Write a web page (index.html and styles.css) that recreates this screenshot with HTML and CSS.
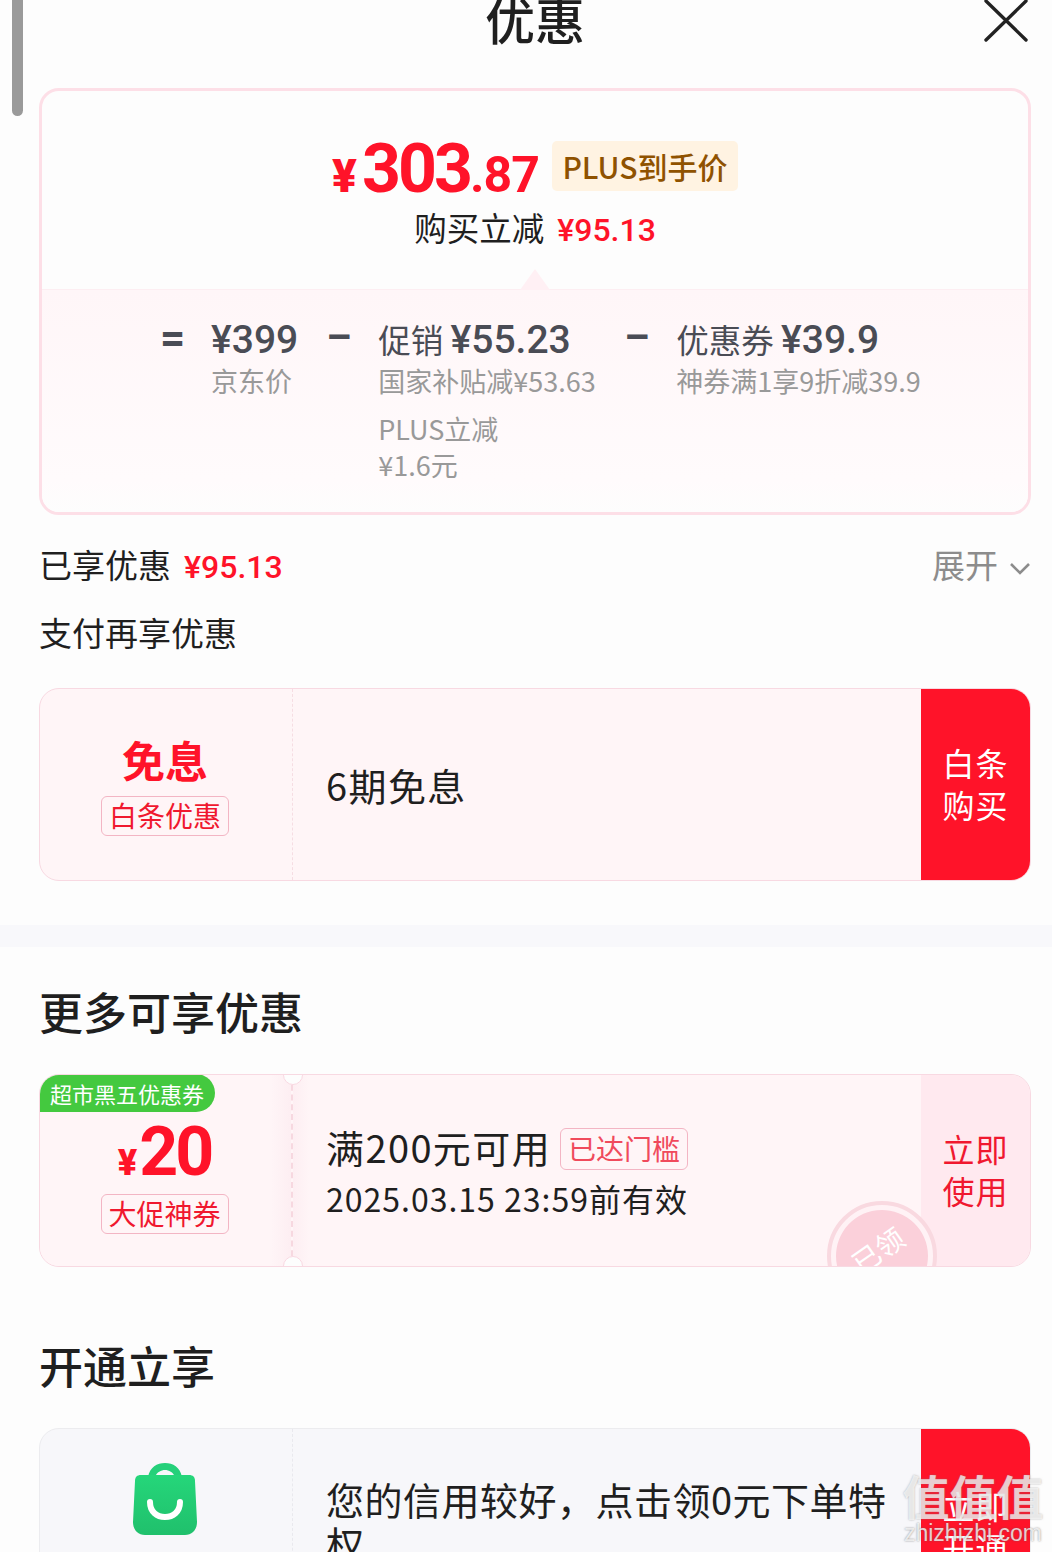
FILE: index.html
```html
<!DOCTYPE html>
<html>
<head>
  <meta charset="utf-8">
  <title>优惠</title>
  <link rel="stylesheet" href="styles.css">
</head>
<body>
  <div class="page">
    <div class="scrollbar"></div>
    <div class="head">优惠</div>
    <svg class="close" width="44" height="42" viewBox="0 0 44 42"><path d="M2 1 L42 40 M42 1 L2 40" stroke="#222" stroke-width="3.4" fill="none" stroke-linecap="round"/></svg>

    <div class="summary">
      <div class="summary-top">
        <div class="price-row">
          <div class="price"><span class="yen">¥</span><span class="big">303</span><span class="dec">.87</span></div>
          <div class="plus-tag">PLUS到手价</div>
        </div>
        <div class="cut-row">购买立减<span class="red-num">¥95.13</span></div>
      </div>
      <div class="summary-bottom">
        <span class="arrow"></span>
        <div class="formula">
          <div class="op op-eq">=</div>
          <div class="term">
            <div class="term-main"><span class="num">¥399</span></div>
            <div class="term-sub">京东价</div>
          </div>
          <div class="op">–</div>
          <div class="term term-promo">
            <div class="term-main">促销 <span class="num">¥55.23</span></div>
            <div class="term-sub">国家补贴减¥53.63</div>
            <div class="term-sub term-gap">PLUS立减</div>
            <div class="term-sub">¥1.6元</div>
          </div>
          <div class="op">–</div>
          <div class="term">
            <div class="term-main">优惠券 <span class="num">¥39.9</span></div>
            <div class="term-sub">神券满1享9折减39.9</div>
          </div>
        </div>
      </div>
    </div>

    <div class="saved-row">
      <div>已享优惠<span class="red-num">¥95.13</span></div>
      <div class="expand">展开
        <svg width="22" height="14" viewBox="0 0 22 14"><path d="M2 2 L11 11 L20 2" stroke="#8c8c8c" stroke-width="2.6" fill="none"/></svg>
      </div>
    </div>
    <div class="pay-title">支付再享优惠</div>

    <div class="coupon">
      <div class="c-left">
        <div class="c-free">免息</div>
        <div class="c-label">白条优惠</div>
      </div>
      <div class="c-main">
        <div class="c-text">6期免息</div>
      </div>
      <div class="c-btn">白条<br>购买</div>
    </div>

    <div class="band"></div>

    <div class="sec-title sec-more">更多可享优惠</div>
    <div class="coupon coupon-ticket">
      <div class="c-tag">超市黑五优惠券</div>
      <div class="c-left">
        <div class="c-amount"><span class="c-yen">¥</span>20</div>
        <div class="c-label">大促神券</div>
      </div>
      <div class="c-main">
        <div class="c-text c-line">满200元可用<span class="c-reach">已达门槛</span></div>
        <div class="c-date">2025.03.15 23:59前有效</div>
      </div>
      <div class="c-btn c-btn-light">立即<br>使用</div>
      <div class="stamp"><span>已领</span></div>
      <span class="notch notch-top"></span>
      <span class="notch notch-bottom"></span>
    </div>

    <div class="sec-title sec-open">开通立享</div>
    <div class="coupon coupon-grey">
      <div class="c-left">
        <svg class="bag" width="66" height="74" viewBox="0 0 66 74">
          <defs>
            <linearGradient id="bagfill" x1="0" y1="0" x2="0" y2="1">
              <stop offset="0" stop-color="#25d67a"/>
              <stop offset="1" stop-color="#20c06c"/>
            </linearGradient>
          </defs>
          <path d="M16 15 C18 5 25 1 33 1 C41 1 48 5 50 15 L43 15 C41 10 37 8 33 8 C29 8 25 10 23 15 Z" fill="#25d07a"/>
          <path d="M9 13 H57 C61 13 63 15 63 19 L65 60 C65 68 60 73 53 73 H13 C6 73 1 68 1 60 L3 19 C3 15 5 13 9 13 Z" fill="url(#bagfill)"/>
          <path d="M18 40 C18 50 25 55 33 55 C41 55 48 50 48 40" stroke="#fff" stroke-width="6" fill="none" stroke-linecap="round"/>
        </svg>
      </div>
      <div class="c-main c-main-top">
        <div class="c-text c-wrap">您的信用较好，点击领0元下单特权</div>
      </div>
      <div class="c-btn c-btn-top">立即<br>开通</div>
    </div>

    <div class="watermark">
      <div class="wm-logo">值值值</div>
      <div class="wm-url">zhizhizhi.com</div>
    </div>
  </div>
</body>
</html>
```

FILE: styles.css
```css
html,
body,
div,
span {
  margin: 0;
  padding: 0;
}

html,
body {
  width: 1052px;
  height: 1552px;
  overflow: hidden;
}

body {
  font-family: "Noto Sans CJK SC", "Noto Sans", sans-serif;
  color: #1f1f1f;
  background: #fdfdfd;
}

.page {
  position: relative;
  height: 1552px;
  padding: 0 21px 0 39px;
  overflow: hidden;
}

.scrollbar {
  position: absolute;
  left: 12px;
  top: -10px;
  width: 11px;
  height: 126px;
  border-radius: 6px;
  background: #9a9a9a;
}

.head {
  height: 72px;
  margin-top: -18px;
  margin-bottom: 34px;
  font-size: 50px;
  font-weight: 500;
  line-height: 72px;
  text-align: center;
}

.close {
  position: absolute;
  left: 984px;
  top: 0;
}

.summary {
  box-sizing: border-box;
  height: 427px;
  border: 3px solid #fddfe7;
  border-radius: 20px;
  overflow: hidden;
}

.summary-top {
  height: 198px;
  padding-top: 52px;
  box-sizing: border-box;
}

.price-row {
  display: flex;
  justify-content: center;
  align-items: center;
  height: 70px;
}

.price {
  font-family: Roboto, sans-serif;
  font-weight: 700;
  color: #ff1329;
  line-height: 70px;
  white-space: nowrap;
}

.yen {
  font-size: 46px;
  font-weight: 900;
  margin-right: 5px;
}

.big {
  font-size: 68px;
  letter-spacing: -3px;
}

.dec {
  font-size: 50px;
  letter-spacing: -1px;
}

.plus-tag {
  margin-left: 13px;
  margin-bottom: 24px;
  width: 186px;
  height: 50px;
  border-radius: 5px;
  background: #fff3e2;
  color: #8f5200;
  font-size: 30px;
  font-weight: 500;
  line-height: 50px;
  text-align: center;
  white-space: nowrap;
}

.cut-row {
  margin-top: -8px;
  font-size: 32.5px;
  line-height: 44px;
  text-align: center;
}

.red-num {
  margin-left: 13px;
  font-family: Roboto, sans-serif;
  font-size: 32px;
  font-weight: 500;
  color: #ff1329;
}

.summary-bottom {
  position: relative;
  height: 223px;
  border-top: 1px solid #fdeef2;
  background: linear-gradient(#fff6f8, #fffbfc 85%, #fdfdfd);
}

.arrow {
  position: absolute;
  left: 478px;
  top: -21px;
  width: 0;
  height: 0;
  border-left: 15px solid transparent;
  border-right: 15px solid transparent;
  border-bottom: 21px solid #fff0f4;
}

.formula {
  display: flex;
  padding-left: 118px;
  padding-top: 26px;
}

.op {
  width: 24px;
  margin-left: 28px;
  margin-right: 28px;
  font-family: Roboto, sans-serif;
  font-size: 40px;
  font-weight: 700;
  line-height: 44px;
  color: #4a4c55;
  text-align: center;
}

.op-eq {
  margin-left: 0;
  margin-right: 27px;
  font-size: 44px;
}

.term-promo {
  min-width: 218px;
}

.term-main {
  font-size: 32.5px;
  line-height: 45px;
  color: #4a4c55;
  white-space: nowrap;
}

.num {
  font-family: Roboto, sans-serif;
  font-size: 39px;
  font-weight: 500;
}

.term-sub {
  font-size: 27px;
  line-height: 36px;
  color: #999;
  white-space: nowrap;
}

.term-gap {
  margin-top: 12px;
}

.saved-row {
  display: flex;
  justify-content: space-between;
  align-items: center;
  margin-top: 27px;
  height: 44px;
  font-size: 33px;
}

.expand {
  display: flex;
  align-items: center;
  gap: 11px;
  color: #8c8c8c;
}

.expand svg {
  margin-top: 10px;
}

.pay-title {
  margin-top: 24px;
  font-size: 33px;
  line-height: 44px;
}

.coupon {
  position: relative;
  display: flex;
  box-sizing: border-box;
  height: 193px;
  margin-top: 34px;
  border: 1px solid #f8d9e2;
  border-radius: 20px;
  background: #fff5f7;
  overflow: hidden;
}

.c-left {
  display: flex;
  flex-direction: column;
  align-items: center;
  justify-content: center;
  flex: none;
  width: 250px;
  padding-right: 2px;
  border-right: 1px dashed #f6dde3;
}

.c-free {
  font-size: 43px;
  font-weight: 700;
  line-height: 52px;
  color: #ff1329;
}

.c-label {
  box-sizing: border-box;
  width: 128px;
  height: 40px;
  margin-top: 11px;
  border: 1px solid #f3b5c4;
  border-radius: 6px;
  font-size: 28px;
  line-height: 36px;
  color: #f0182f;
  text-align: center;
  white-space: nowrap;
}

.c-main {
  flex: 1;
  display: flex;
  flex-direction: column;
  justify-content: center;
  padding-left: 33px;
  min-width: 0;
}

.c-text {
  font-size: 38px;
  line-height: 44px;
  letter-spacing: 1.4px;
}

.c-btn {
  flex: none;
  display: flex;
  flex-direction: column;
  align-items: center;
  justify-content: center;
  box-sizing: border-box;
  width: 109px;
  padding-bottom: 4px;
  background: #ff1329;
  color: #fff;
  font-size: 32px;
  line-height: 42px;
  letter-spacing: 1px;
  text-align: center;
}

.band {
  height: 22px;
  margin: 44px -21px 0 -39px;
  background: #f8f8fb;
}

.sec-title {
  font-size: 44px;
  font-weight: 500;
  line-height: 56px;
}

.sec-more {
  margin-top: 36px;
}

.sec-more + .coupon {
  margin-top: 35px;
}

.sec-open {
  margin-top: 70px;
}

.sec-open + .coupon {
  margin-top: 35px;
}

.coupon-ticket .c-left {
  justify-content: flex-start;
  background: linear-gradient(90deg, #fff5f7 92%, #fdeef2);
  border-right: 2px dashed #f7d8e0;
  width: 249px;
}

.coupon-ticket .c-main {
  padding-top: 2px;
  background: linear-gradient(90deg, #fdeef2, #fff5f7 16px);
}

.c-tag {
  position: absolute;
  left: -1px;
  top: -1px;
  width: 176px;
  height: 38px;
  border-radius: 20px 20px 20px 0;
  background: #44c93f;
  color: #fff;
  font-size: 22px;
  line-height: 38px;
  text-align: center;
  white-space: nowrap;
}

.c-amount {
  font-family: Roboto, sans-serif;
  font-size: 68px;
  font-weight: 700;
  line-height: 64px;
  letter-spacing: -3px;
  color: #ff1329;
  margin-top: 45px;
}

.c-yen {
  font-size: 36px;
  font-weight: 900;
  margin-right: 2px;
  letter-spacing: 0;
}

.coupon-ticket .c-label {
  margin-top: -1px;
}

.c-line {
  display: flex;
  align-items: center;
  white-space: nowrap;
}

.c-reach {
  box-sizing: border-box;
  width: 128px;
  height: 42px;
  margin-left: 9px;
  margin-top: 4px;
  border: 1px solid #f3b5c4;
  border-radius: 6px;
  font-size: 28px;
  line-height: 38px;
  letter-spacing: 0;
  color: #f04a5c;
  text-align: center;
}

.c-date {
  margin-top: 7px;
  font-size: 32px;
  line-height: 42px;
  letter-spacing: 1px;
  white-space: nowrap;
}

.c-btn-light {
  background: #ffe9ef;
  color: #f0182f;
}

.stamp {
  position: absolute;
  left: 787px;
  top: 126px;
  box-sizing: border-box;
  width: 110px;
  height: 110px;
  border: 4px solid #f9d9e0;
  border-radius: 50%;
  padding: 5px;
  background: #fff2f5;
}

.stamp span {
  display: block;
  height: 92px;
  border-radius: 50%;
  background: #fbd0da;
  color: #fff;
  font-size: 28px;
  line-height: 76px;
  text-align: center;
  transform: rotate(-35deg);
}

.notch {
  position: absolute;
  left: 243px;
  width: 18px;
  height: 18px;
  border: 1px solid #f8d9e2;
  border-radius: 50%;
  background: #fdfdfd;
}

.notch-top {
  top: -10px;
}

.notch-bottom {
  bottom: -10px;
}

.coupon-grey {
  background: #f7f7fa;
  border-color: #ececef;
}

.coupon-grey .c-left {
  justify-content: flex-start;
  border-right-color: #e9e9ee;
}

.bag {
  margin-top: 33px;
}

.c-main-top {
  justify-content: flex-start;
  padding-top: 48px;
  padding-right: 30px;
}

.c-wrap {
  letter-spacing: .5px;
}

.c-btn-top {
  justify-content: flex-start;
  padding-top: 55px;
}

.watermark {
  position: absolute;
  left: 900px;
  top: 1468px;
  width: 146px;
  text-align: center;
}

.wm-logo {
  font-size: 47px;
  font-weight: 700;
  line-height: 54px;
  color: rgba(255, 255, 255, .72);
  text-shadow: 0 0 2px rgba(120, 120, 120, .6);
  white-space: nowrap;
}

.wm-url {
  font-family: "Liberation Sans", sans-serif;
  font-size: 23px;
  line-height: 22px;
  color: rgba(255, 255, 255, .75);
  text-shadow: 0 0 2px rgba(90, 90, 90, .7);
  white-space: nowrap;
}
```
